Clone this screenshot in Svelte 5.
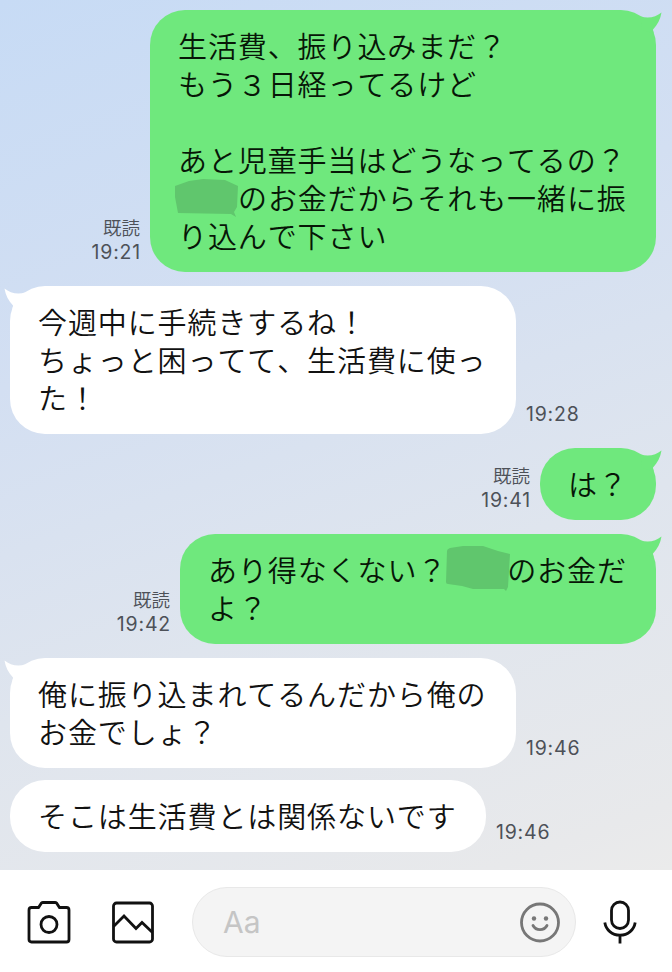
<script>
  const messages = [
    { mine: true, tail: true, read: true, time: '19:21', width: 506, lines: [
      ['生活費、振り込みまだ？'], ['もう３日経ってるけど'], [''], ['あと児童手当はどうなってるの？'],
      [{ mask: 'a' }, 'のお金だからそれも一緒に振'], ['り込んで下さい'] ] },
    { tail: true, time: '19:28', width: 506, lines: [['今週中に手続きするね！'], ['ちょっと困ってて、生活費に使っ'], ['た！']] },
    { mine: true, tail: true, read: true, time: '19:41', width: 116, lines: [['は？']] },
    { mine: true, tail: true, read: true, time: '19:42', width: 476, lines: [
      ['あり得なくない？', { mask: 'b' }, 'のお金だ'], ['よ？'] ] },
    { tail: true, time: '19:46', width: 506, lines: [['俺に振り込まれてるんだから俺の'], ['お金でしょ？']] },
    { follow: true, time: '19:46', width: 476, lines: [['そこは生活費とは関係ないです']] }
  ];
  const masks = {
    a: 'M0 7L14 2L28 0L50 1L63 7L62 28L59 33L61 38L56 35L3 34L0 18Z',
    b: 'M1 5Q1 3 4 2L17 0H37L52 5L64 8L62 41L60 45L58 43H27L16 40L2 38Q0 38 0 36Z'
  };
</script>

<div class="screen">
  <main class="chat">
    {#each messages as m}
      <section class="row" class:mine={m.mine} class:follow={m.follow}>
        <div class="bubble" style:width="{m.width}px">
          {#if m.tail}
            <svg class="tail" width="26" height="32" viewBox="0 0 26 32"><path d="M4.500 6.200C12 9 20 7 25.500 2.500C24.500 9 21.500 15 17 19.500L17.500 23L6 20Z" /></svg>
          {/if}
          {#each m.lines as line}
            <p>{#each line as part}{#if part.mask}<span class="gap"><svg class="mask {part.mask}" width="64" height="46" viewBox="0 0 64 46"><path d={masks[part.mask]} /></svg></span>{:else}{part}{/if}{/each}</p>
          {/each}
        </div>
        <div class="meta">
          {#if m.read}<span class="read">既読</span>{/if}
          <time>{m.time}</time>
        </div>
      </section>
    {/each}
  </main>

  <footer>
    <svg class="camera" width="44" height="44" viewBox="0 0 44 44">
      <path d="M4.500 7.500H11.500L14.500 3Q15 2.500 16 2.500H28Q29 2.500 29.500 3L32.500 7.500H39.500Q42 7.500 42 10V39.500Q42 42 39.500 42H4.500Q2 42 2 39.500V10Q2 7.500 4.500 7.500Z" />
      <circle cx="22" cy="24.500" r="8" />
    </svg>
    <svg class="photo" width="44" height="44" viewBox="0 0 44 44">
      <rect x="2.500" y="3" width="39" height="39" rx="3" />
      <path d="M2.500 26.500L13 16L25 28.500L31 22.500L41.500 32.500" />
    </svg>
    <div class="input">
      <span>Aa</span>
      <svg class="smile" width="42" height="42" viewBox="0 0 42 42">
        <circle cx="21" cy="21.500" r="18.500" />
        <circle class="eye" cx="15" cy="17.500" r="2.200" />
        <circle class="eye" cx="27" cy="17.500" r="2.200" />
        <path d="M14 24.500C17 30 25 30 28 24.500" stroke-linecap="round" />
      </svg>
    </div>
    <svg class="mic" width="36" height="46" viewBox="0 0 36 46">
      <rect x="9.500" y="3" width="17" height="26.500" rx="8.500" />
      <path d="M2.800 23.500C4 31 10 36.200 18 36.200S32 31 33.200 23.500M18 36V44.500" />
    </svg>
  </footer>
</div>

<style>
  :global(body) { margin: 0; }
  .screen {
    width: 672px; height: 972px; display: flex; flex-direction: column; overflow: hidden;
    font-family: "Noto Sans CJK JP", sans-serif;
  }
  .chat {
    flex: 0 0 870px; box-sizing: border-box; padding: 10px 16px 0 10px;
    display: flex; flex-direction: column; gap: 14px;
    background: linear-gradient(160deg, #c7dbf5 0%, #d3dff2 35%, #dfe5ee 65%, #e8e9eb 94%, #ebebeb 100%);
  }
  .row { display: flex; align-items: flex-end; gap: 10px; }
  .row.mine { flex-direction: row-reverse; }
  .row.follow { margin-top: -2px; }
  .bubble {
    position: relative; box-sizing: border-box; flex: none; padding: 16px 0 18px 28px;
    border-radius: 35px; background: #fff; color: #111;
  }
  .mine .bubble { background: #6fe87d; color: #071607; }
  p {
    margin: 0; height: 38px; line-height: 38px; font-size: 29px; font-weight: 350;
    letter-spacing: 0.9px; white-space: pre; text-spacing-trim: space-all; font-kerning: none;
  }
  .tail { position: absolute; top: 0; left: -6px; transform: scaleX(-1); fill: #fff; }
  .mine .tail { left: auto; right: -6px; transform: none; fill: #6fe87d; }
  .gap { position: relative; display: inline-block; width: 60px; height: 1px; }
  .mask { position: absolute; left: -3px; top: -30px; fill: #60c66d; }
  .mask.b { left: -1px; top: -35px; }
  .meta {
    display: flex; flex-direction: column; padding-bottom: 8px; color: #4d5158;
    font-size: 19px; line-height: 24px;
  }
  .mine .meta { align-items: flex-end; }
  .read { font-size: 18.500px; font-weight: 350; margin: 0 0 1px 0; }
  time { font-family: Inter, sans-serif; font-size: 19.500px; font-weight: 400; letter-spacing: 0.8px; }
  .mine time { margin-right: -1px; }
  footer {
    flex: 1; display: flex; align-items: center; box-sizing: border-box; padding: 1px 0 0 27px;
    background: #fff;
  }
  footer svg { fill: none; stroke: #111; stroke-width: 2.800; flex: none; }
  .photo { margin-left: 40px; }
  .input {
    box-sizing: border-box; width: 384px; height: 70px; margin: 0 26px 0 37px; padding: 0 14px 0 30px;
    display: flex; align-items: center; justify-content: space-between;
    border: 1.500px solid #e8e8e8; border-radius: 35px; background: #f4f4f4;
    color: #c5c5c5; font: 400 30px Inter, sans-serif;
  }
  footer .smile { stroke: #777; stroke-width: 2.800; }
  footer .smile .eye { fill: #777; stroke: none; }
</style>
